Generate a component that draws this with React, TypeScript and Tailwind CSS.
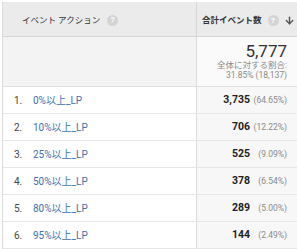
import { ArrowDown } from "lucide-react";

type Row = {
  rank: string;
  label: string;
  count: string;
  pct: string;
};

const rows: Row[] = [
  { rank: "1.", label: "0%以上_LP", count: "3,735", pct: "(64.65%)" },
  { rank: "2.", label: "10%以上_LP", count: "706", pct: "(12.22%)" },
  { rank: "3.", label: "25%以上_LP", count: "525", pct: "(9.09%)" },
  { rank: "4.", label: "50%以上_LP", count: "378", pct: "(6.54%)" },
  { rank: "5.", label: "80%以上_LP", count: "289", pct: "(5.00%)" },
  { rank: "6.", label: "95%以上_LP", count: "144", pct: "(2.49%)" },
];

const font = {
  fontFamily: '"Roboto", "Liberation Sans", "Noto Sans CJK JP", sans-serif',
};

const Help = () => (
  <span className="inline-flex w-[11px] h-[11px] rounded-full bg-[#d4d4d4] text-white text-[8px] font-bold items-center justify-center leading-none">
    ?
  </span>
);

export default function App() {
  return (
    <div className="w-[297px] h-[249px] bg-white pt-[2px] pl-[2px] overflow-hidden" style={font}>
      <div className="border-l border-[#dcdcdc] text-[#333]">
        {/* header */}
        <div className="grid grid-cols-[194px_1fr] h-[35px] bg-[#ebebeb] border-b border-[#d6d6d6]">
          <div className="flex items-center gap-[7px] pl-[19px] pt-[2px] text-[8.5px] border-r border-[#d6d6d6] whitespace-nowrap">
            <span>イベント アクション</span>
            <Help />
          </div>
          <div className="flex items-center pl-[5px] pt-[2px] text-[8.5px] font-bold whitespace-nowrap">
            <span>合計イベント数</span>
            <span className="ml-[6px]">
              <Help />
            </span>
            <ArrowDown className="ml-[5px] w-[11px] h-[11px] text-[#555]" strokeWidth={3} />
          </div>
        </div>

        {/* summary */}
        <div className="grid grid-cols-[194px_1fr] h-[50px] bg-[#f3f3f3] border-b border-[#dedede]">
          <div className="border-r border-[#dcdcdc]" />
          <div className="bg-[#fafafa] flex flex-col items-end pr-[10px] pt-[5px] whitespace-nowrap">
            <span className="text-[17px] leading-[18px] text-[#333]">5,777</span>
            <span className="text-[8.5px] leading-[10px] text-[#8a8a8a]">全体に対する割合:</span>
            <span className="text-[8.5px] leading-[10px] text-[#8a8a8a]">31.85% (18,137)</span>
          </div>
        </div>

        {/* rows */}
        {rows.map((r) => (
          <div
            key={r.rank}
            className="grid grid-cols-[194px_1fr] h-[27px] border-b border-[#e6e6e6] text-[10px]"
          >
            <div className="flex items-center border-r border-[#dcdcdc] whitespace-nowrap">
              <span className="w-[30px] pl-[11px] text-[#444]">{r.rank}</span>
              <span className="text-[#4072b0]">{r.label}</span>
            </div>
            <div className="flex items-center justify-end pr-[10px] bg-[#f7f7f7] whitespace-nowrap">
              <span className="font-bold text-[10.5px] text-[#222]">{r.count}</span>
              <span className="w-[37px] text-right text-[8.5px] text-[#8a8a8a]">{r.pct}</span>
            </div>
          </div>
        ))}
      </div>
    </div>
  );
}
